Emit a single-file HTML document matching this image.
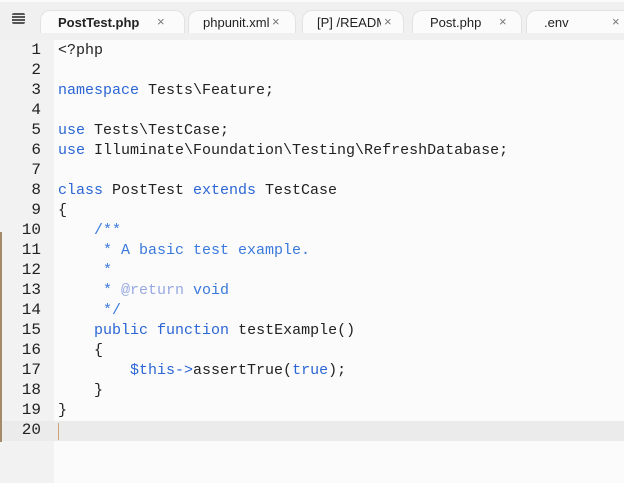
<!DOCTYPE html>
<html><head><meta charset="utf-8"><style>
*{margin:0;padding:0;box-sizing:border-box}
body{width:624px;height:483px;overflow:hidden;background:#f2f2f2;position:relative;font-family:"Liberation Sans",sans-serif}
.topbar{position:absolute;left:0;top:0;width:624px;height:40px;background:#f0f0f0;border-top:2px solid #fafafa}
.tab{position:absolute;top:10px;height:23px;background:#fbfbfb;border-radius:10px 10px 0 0;border:1px solid #e2e2e2;border-bottom:none}
.tl{position:absolute;top:15px;font-size:13px;color:#222;white-space:nowrap}
.x{position:absolute;top:14px;font-size:13px;color:#777}
.gutter{position:absolute;left:0;top:40px;width:54px;height:443px;background:#f2f2f2}
.editor{position:absolute;left:54px;top:40px;width:570px;height:443px;background:#fbfbfb}
.cur{position:absolute;left:0;top:421px;width:624px;height:20px;background:#ebebeb}
.ln{position:absolute;left:0;font-family:"Liberation Mono",monospace;font-size:16px;color:#222;text-align:right;width:41px}
.code{position:absolute;left:58px;font-family:"Liberation Mono",monospace;font-size:15px;color:#222;white-space:pre}
.k{color:#2b66d4}.c{color:#3a79dc}.a{color:#97a9e3}
</style></head><body>
<div class="topbar"></div>
<div style="position:absolute;left:12px;top:13px;width:13px;height:11px;border-radius:2px;background:repeating-linear-gradient(#555 0 2px,transparent 2px 3px)"></div>
<div class="tab" style="left:40px;width:145px"></div>
<div class="tab" style="left:188px;width:108px"></div>
<div class="tab" style="left:302px;width:102px"></div>
<div class="tab" style="left:412px;width:110px"></div>
<div class="tab" style="left:526px;width:110px"></div>
<div class="tl" style="left:58px;font-weight:bold">PostTest.php</div><div class="x" style="left:157px">×</div>
<div class="tl" style="left:203px;width:66px;overflow:hidden">phpunit.xml</div><div class="x" style="left:272px">×</div>
<div class="tl" style="left:317px;width:64px;overflow:hidden">[P] /README.md</div><div class="x" style="left:384px">×</div>
<div class="tl" style="left:430px">Post.php</div><div class="x" style="left:499px">×</div>
<div class="tl" style="left:544px">.env</div><div class="x" style="left:612px">×</div>
<div class="gutter"></div>
<div class="editor"></div>
<div class="cur"></div>
<div style="position:absolute;left:0;top:232px;width:2px;height:210px;background:#a58a6a"></div>
<div style="position:absolute;left:58px;top:423px;width:1px;height:17px;background:#c9a27a"></div>
<div class="ln" style="top:41px">1</div><div class="ln" style="top:61px">2</div><div class="ln" style="top:81px">3</div><div class="ln" style="top:101px">4</div><div class="ln" style="top:121px">5</div><div class="ln" style="top:141px">6</div><div class="ln" style="top:161px">7</div><div class="ln" style="top:181px">8</div><div class="ln" style="top:201px">9</div><div class="ln" style="top:221px">10</div><div class="ln" style="top:241px">11</div><div class="ln" style="top:261px">12</div><div class="ln" style="top:281px">13</div><div class="ln" style="top:301px">14</div><div class="ln" style="top:321px">15</div><div class="ln" style="top:341px">16</div><div class="ln" style="top:361px">17</div><div class="ln" style="top:381px">18</div><div class="ln" style="top:401px">19</div><div class="ln" style="top:421px">20</div>
<div class="code" style="top:42px">&lt;?php</div>
<div class="code" style="top:82px"><span class="k">namespace</span> Tests\Feature;</div>
<div class="code" style="top:122px"><span class="k">use</span> Tests\TestCase;</div>
<div class="code" style="top:142px"><span class="k">use</span> Illuminate\Foundation\Testing\RefreshDatabase;</div>
<div class="code" style="top:182px"><span class="k">class</span> PostTest <span class="k">extends</span> TestCase</div>
<div class="code" style="top:202px">{</div>
<div class="code c" style="top:222px">    /**</div>
<div class="code c" style="top:242px">     * A basic test example.</div>
<div class="code c" style="top:262px">     *</div>
<div class="code c" style="top:282px">     * <span class="a">@return</span> void</div>
<div class="code c" style="top:302px">     */</div>
<div class="code" style="top:322px">    <span class="k">public</span> <span class="k">function</span> testExample()</div>
<div class="code" style="top:342px">    {</div>
<div class="code" style="top:362px">        <span class="k">$this-&gt;</span>assertTrue(<span class="k">true</span>);</div>
<div class="code" style="top:382px">    }</div>
<div class="code" style="top:402px">}</div>
</body></html>
